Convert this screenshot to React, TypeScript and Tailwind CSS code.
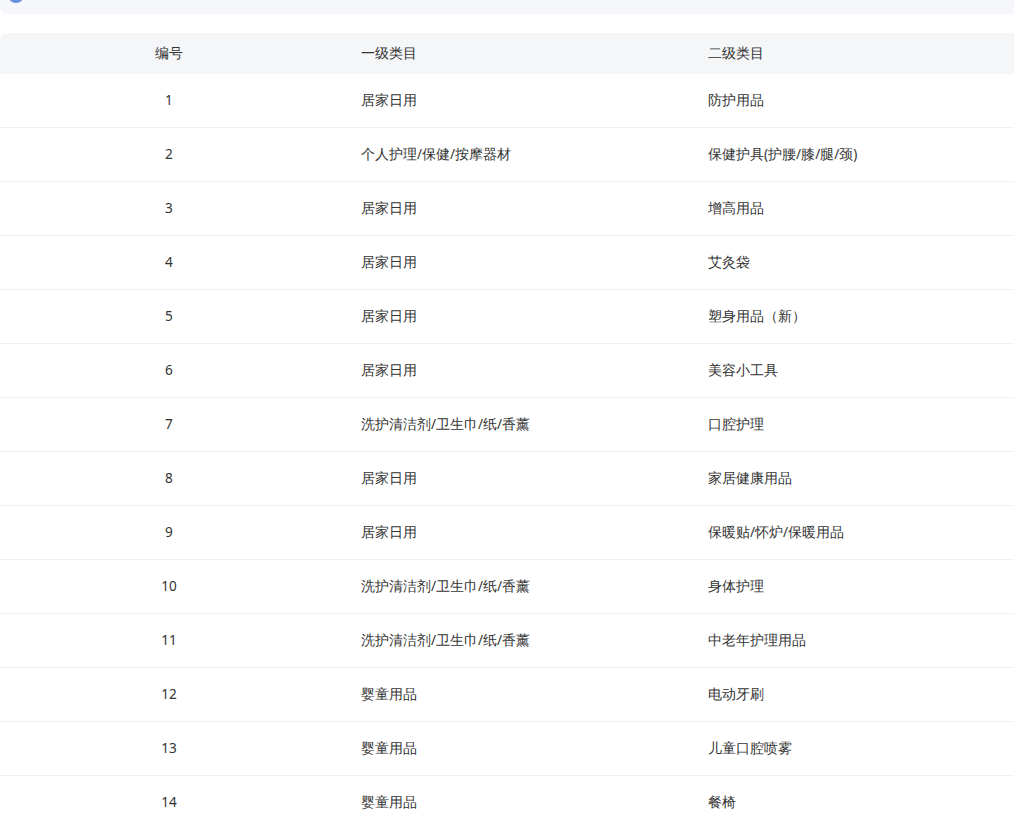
const rows: [string, string][] = [
  ["居家日用", "防护用品"],
  ["个人护理/保健/按摩器材", "保健护具(护腰/膝/腿/颈)"],
  ["居家日用", "增高用品"],
  ["居家日用", "艾灸袋"],
  ["居家日用", "塑身用品（新）"],
  ["居家日用", "美容小工具"],
  ["洗护清洁剂/卫生巾/纸/香薰", "口腔护理"],
  ["居家日用", "家居健康用品"],
  ["居家日用", "保暖贴/怀炉/保暖用品"],
  ["洗护清洁剂/卫生巾/纸/香薰", "身体护理"],
  ["洗护清洁剂/卫生巾/纸/香薰", "中老年护理用品"],
  ["婴童用品", "电动牙刷"],
  ["婴童用品", "儿童口腔喷雾"],
  ["婴童用品", "餐椅"],
];

export default function App() {
  return (
    <div className="h-[814px] overflow-hidden bg-white text-[13.6px] text-[#333] [font-family:'Noto_Sans_CJK_SC',sans-serif]">
      <div className="relative -mt-[30px] h-[44px] overflow-hidden rounded-bl-lg bg-[#f5f7fa]">
        <div className="absolute left-[8px] top-[17px] h-[16px] w-[16px] rounded-full bg-[#6b8fe0]" />
      </div>
      <div className="mt-[19px]">
        <div className="flex h-[41px] items-center rounded-tl-lg bg-[#f5f6f8]">
          <div className="w-[338px] text-center">编号</div>
          <div className="w-[347px] pl-[23px]">一级类目</div>
          <div className="flex-1 pl-[23px]">二级类目</div>
        </div>
        {rows.map((r, i) => (
          <div key={i} className="flex h-[54px] items-center border-b border-[#f0f0f0]">
            <div className="w-[338px] text-center">{i + 1}</div>
            <div className="w-[347px] pl-[23px]">{r[0]}</div>
            <div className="flex-1 pl-[23px]">{r[1]}</div>
          </div>
        ))}
      </div>
    </div>
  );
}
